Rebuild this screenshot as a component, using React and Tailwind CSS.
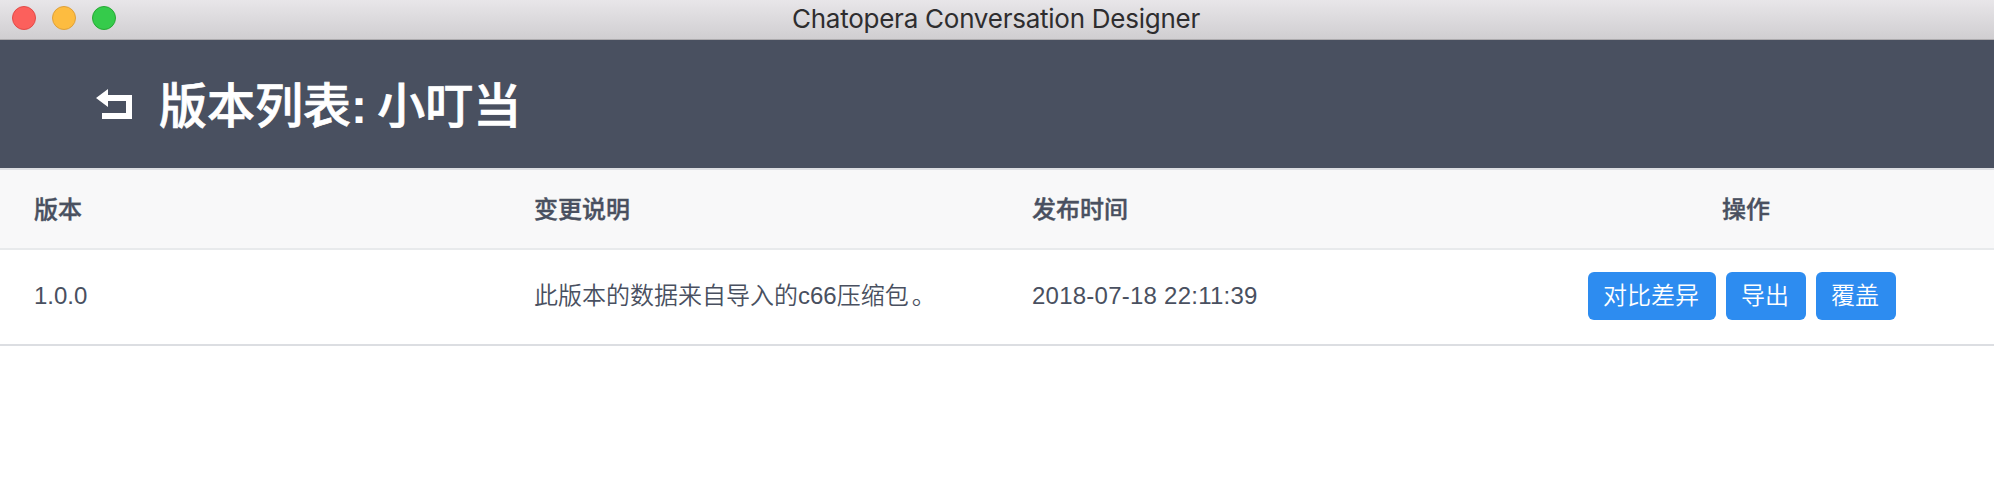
const columns = ['版本', '变更说明', '发布时间'];
const actions = ['对比差异', '导出', '覆盖'];

function TitleBar() {
  return (
    <div className="grid h-10 grid-cols-[1fr_auto_1fr] items-start border-b border-[#adabae] bg-linear-to-b from-[#e8e6e9] to-[#d0ced1]">
      <div className="flex gap-4 pt-1.5 pl-3">
        <span className="size-6 rounded-full border border-[#e24b48] bg-[#fc605c]" />
        <span className="size-6 rounded-full border border-[#dea03a] bg-[#fdbc40]" />
        <span className="size-6 rounded-full border border-[#27a934] bg-[#35cb4b]" />
      </div>
      <div className="pr-0.5 font-['Inter',sans-serif] text-[26px] leading-[38px] tracking-[-0.25px] whitespace-nowrap text-[#2e2d2f]">
        Chatopera Conversation Designer
      </div>
    </div>
  );
}

function BackIcon() {
  return (
    <svg className="h-[30px] w-9 shrink-0" viewBox="0 0 36 30" fill="#fff">
      <path d="M0 9 12 0V6H36V30H6V24H30V12H12V18Z" />
    </svg>
  );
}

export default function App() {
  return (
    <div className="h-[486px] w-full overflow-hidden bg-white font-['Liberation_Sans','Noto_Sans_CJK_SC',sans-serif] text-2xl text-[#495060]">
      <TitleBar />
      <header className="flex h-32 items-center gap-[27px] bg-[#495060] pl-24 text-white">
        <BackIcon />
        <h1 className="pt-1.5 text-5xl leading-[72px] font-medium [-webkit-text-stroke:0.7px_#fff]">
          版本列表<span className="font-bold tracking-[-1.5px] [-webkit-text-stroke:0]">: </span>小叮当
        </h1>
      </header>
      <div className="grid h-[82px] grid-cols-[500px_498px_498px_498px] items-center border-y-2 border-t-[#dcdee2] border-b-[#e8eaec] bg-[#f8f8f9] font-medium [-webkit-text-stroke:0.4px_#495060]">
        {columns.map((c) => (
          <div key={c} className="pt-0.5 pl-[34px]">{c}</div>
        ))}
        <div className="pt-0.5 pl-0.5 text-center">操作</div>
      </div>
      <div className="grid h-24 grid-cols-[500px_498px_498px_498px] items-center border-b-2 border-[#dcdee2] pb-0.5 font-[350]">
        <div className="pl-[34px]">1.0.0</div>
        <div className="pl-[34px]">
          此版本的数据来自导入的c66压缩包<span className="pl-[3px]">。</span>
        </div>
        <div className="pl-[34px] tracking-[0.24px]">2018-07-18 22:11:39</div>
        <div className="flex justify-center gap-2.5 pr-1.5 text-white">
          {actions.map((a) => (
            <button key={a} className="h-12 rounded-md bg-[#2d8cf0] pr-[17px] pl-[15px]">{a}</button>
          ))}
        </div>
      </div>
    </div>
  );
}
